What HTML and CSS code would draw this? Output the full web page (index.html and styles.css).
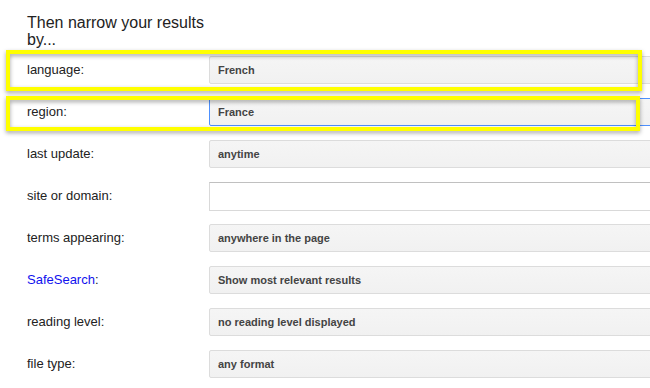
FILE: index.html
```html
<!DOCTYPE html>
<html>
<head>
<meta charset="utf-8">
<link rel="stylesheet" href="styles.css">
</head>
<body>
<div class="page">
  <h2 class="heading">Then narrow your results<br>by...</h2>
  <div class="form">
    <div class="label">language:</div>
    <div class="select">French</div>
    <div class="label">region:</div>
    <div class="select focused">France</div>
    <div class="label">last update:</div>
    <div class="select">anytime</div>
    <div class="label">site or domain:</div>
    <div class="input"></div>
    <div class="label">terms appearing:</div>
    <div class="select">anywhere in the page</div>
    <div class="label"><a class="link" href="#">SafeSearch</a>:</div>
    <div class="select">Show most relevant results</div>
    <div class="label">reading level:</div>
    <div class="select">no reading level displayed</div>
    <div class="label">file type:</div>
    <div class="select">any format</div>
  </div>
  <div class="highlight hl-one"></div>
  <div class="highlight hl-two"></div>
</div>
</body>
</html>
```
FILE: styles.css
```css
html, body {
  margin: 0;
  padding: 0;
  background: #fff;
  overflow: hidden;
}
.page {
  position: relative;
  width: 650px;
  height: 388px;
  overflow: hidden;
  padding: 14px 0 0 27px;
  box-sizing: border-box;
  font-family: "Liberation Sans", Arial, sans-serif;
  color: #222;
}
.heading {
  margin: 0 0 8px 0;
  font-size: 16px;
  line-height: 17px;
  font-weight: normal;
  color: #222;
}
.form {
  display: grid;
  grid-template-columns: 182px 460px;
  grid-auto-rows: 28px;
  row-gap: 14px;
}
.label {
  font-size: 13px;
  line-height: 28px;
  color: #222;
  white-space: nowrap;
}
.link {
  color: #1111ee;
  text-decoration: none;
}
.select {
  box-sizing: border-box;
  height: 28px;
  border: 1px solid #dcdcdc;
  border-radius: 2px;
  background: linear-gradient(#f5f5f5, #f1f1f1);
  padding-left: 8px;
  font-size: 11px;
  font-weight: bold;
  line-height: 26px;
  color: #444;
  white-space: nowrap;
}
.select.focused {
  border-color: #4d90fe;
}
.input {
  box-sizing: border-box;
  height: 29px;
  border: 1px solid #d9d9d9;
  border-top-color: #c0c0c0;
  background: #fff;
}
.highlight {
  position: absolute;
  box-sizing: border-box;
  border: 4px solid #ffff00;
  filter: drop-shadow(0 2px 2px rgba(0, 0, 0, 0.35));
}
.hl-one {
  left: 6px;
  top: 50px;
  width: 636px;
  height: 41px;
}
.hl-two {
  left: 6px;
  top: 96px;
  width: 634px;
  height: 35px;
}
```
